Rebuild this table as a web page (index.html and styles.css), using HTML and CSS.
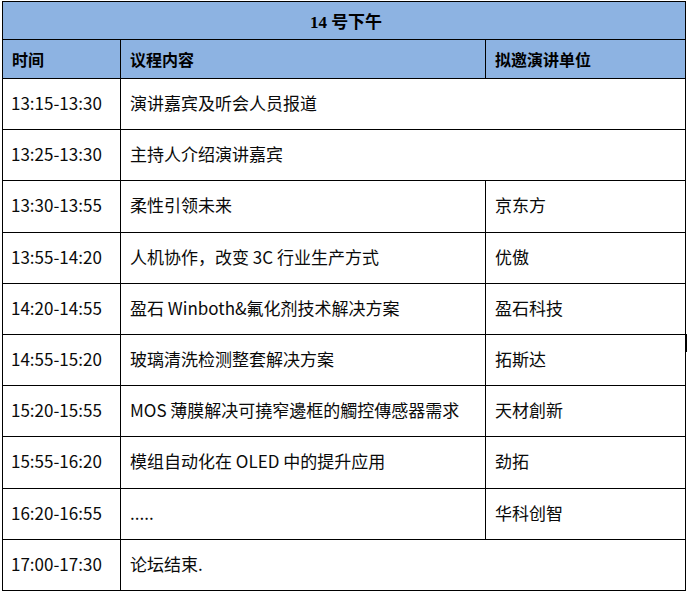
FILE: index.html
```html
<!DOCTYPE html>
<html lang="zh-CN">
<head>
<meta charset="utf-8">
<title>14号下午</title>
<link rel="stylesheet" href="styles.css">
</head>
<body>
<table class="agenda">
  <colgroup>
    <col class="c-time">
    <col class="c-topic">
    <col class="c-org">
  </colgroup>
  <thead>
    <tr class="h-title"><th colspan="3">14 号下午</th></tr>
    <tr class="h-cols"><th>时间</th><th>议程内容</th><th>拟邀演讲单位</th></tr>
  </thead>
  <tbody>
    <tr><td>13:15-13:30</td><td colspan="2">演讲嘉宾及听会人员报道</td></tr>
    <tr><td>13:25-13:30</td><td colspan="2">主持人介绍演讲嘉宾</td></tr>
    <tr><td>13:30-13:55</td><td>柔性引领未来</td><td>京东方</td></tr>
    <tr><td>13:55-14:20</td><td>人机协作，改变 3C 行业生产方式</td><td>优傲</td></tr>
    <tr><td>14:20-14:55</td><td>盈石 Winboth&amp;氟化剂技术解决方案</td><td>盈石科技</td></tr>
    <tr><td>14:55-15:20</td><td>玻璃清洗检测整套解决方案</td><td>拓斯达</td></tr>
    <tr><td>15:20-15:55</td><td>MOS 薄膜解决可撓窄邊框的觸控傳感器需求</td><td>天材創新</td></tr>
    <tr><td>15:55-16:20</td><td>模组自动化在 OLED 中的提升应用</td><td>劲拓</td></tr>
    <tr><td>16:20-16:55</td><td>.....</td><td>华科创智</td></tr>
    <tr><td>17:00-17:30</td><td colspan="2">论坛结束.</td></tr>
  </tbody>
</table>
<div class="edge-mark"></div>
</body>
</html>
```

FILE: styles.css
```css
html, body {
  margin: 0;
  padding: 0;
  background: #ffffff;
}
body {
  padding: 1px 0 0 2px;
  position: relative;
  font-family: "Noto Sans CJK SC", "Noto Sans", sans-serif;
}
.agenda {
  border-collapse: collapse;
  table-layout: fixed;
  width: 683px;
  color: #0a0a0a;
}
.c-time { width: 118px; }
.c-topic { width: 365px; }
.c-org { width: 200px; }
.agenda th,
.agenda td {
  border: 1px solid #000;
  padding: 0 0 0 9px;
  text-align: left;
  vertical-align: middle;
  white-space: nowrap;
}
.agenda th {
  background: #8db3e2;
  font-weight: 700;
  font-size: 16px;
  color: #000;
}
.h-title th {
  height: 37px;
  text-align: center;
  font-family: "Liberation Serif", "Noto Sans CJK SC", serif;
  font-size: 17px;
  padding: 0 0 0 4px;
}
.h-cols th { height: 38px; }
.h-cols th:first-child { padding-left: 9px; }
.agenda td {
  height: 47.2px;
  padding-bottom: 3px;
  font-size: 17px;
  font-weight: 400;
}
.agenda td:first-child { padding-left: 8px; }
.edge-mark {
  position: absolute;
  left: 686px;
  top: 334px;
  width: 1px;
  height: 18px;
  background: #000;
}
```
